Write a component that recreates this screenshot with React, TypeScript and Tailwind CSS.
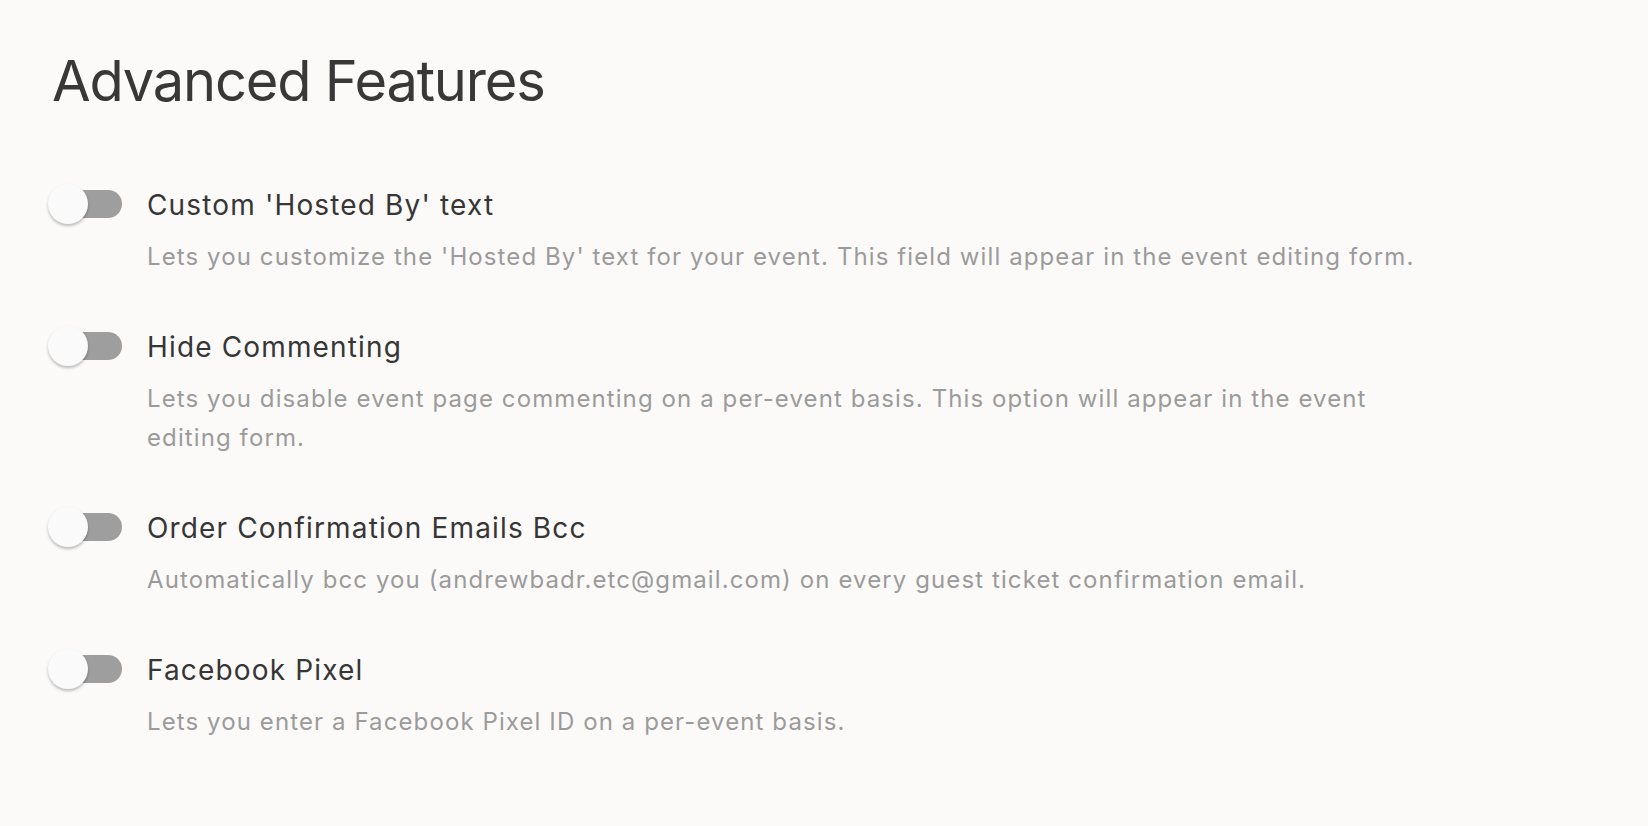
const features = [
  {
    title: "Custom 'Hosted By' text",
    desc: "Lets you customize the 'Hosted By' text for your event. This field will appear in the event editing form.",
  },
  {
    title: "Hide Commenting",
    desc: "Lets you disable event page commenting on a per-event basis. This option will appear in the event editing form.",
  },
  {
    title: "Order Confirmation Emails Bcc",
    desc: "Automatically bcc you (andrewbadr.etc@gmail.com) on every guest ticket confirmation email.",
  },
  {
    title: "Facebook Pixel",
    desc: "Lets you enter a Facebook Pixel ID on a per-event basis.",
  },
];

function Toggle() {
  return (
    <div className="relative flex items-center w-[74px] h-10 -ml-1 -mt-[3px] shrink-0">
      <div className="ml-[6px] h-7 w-[68px] rounded-full bg-[#9e9e9e]" />
      <div className="absolute left-0 top-0 size-10 rounded-full bg-[#fafafa] shadow-[0_2px_3px_rgba(0,0,0,0.25)]" />
    </div>
  );
}

export default function App() {
  return (
    <div className="min-h-screen bg-[#fbfaf9] px-[52px] pt-12 font-['Inter',sans-serif]">
      <h1 className="text-[56px] leading-[1.2] tracking-[-1.2px] text-[#383838] font-normal">
        Advanced Features
      </h1>

      <div className="mt-[72px] flex flex-col gap-[53px]">
        {features.map((f) => {
          return (
            <div key={f.title} className="flex items-start gap-[25px]">
              <Toggle />
              <div className="flex flex-col gap-[14px] max-w-[1300px]">
                <span className="text-[28px] leading-9 tracking-[1.15px] text-[#363636]">
                  {f.title}
                </span>
                <p className="text-[24px] leading-[39px] tracking-[1.1px] text-[#9b9b9b]">
                  {f.desc}
                </p>
              </div>
            </div>
          );
        })}
      </div>
    </div>
  );
}
